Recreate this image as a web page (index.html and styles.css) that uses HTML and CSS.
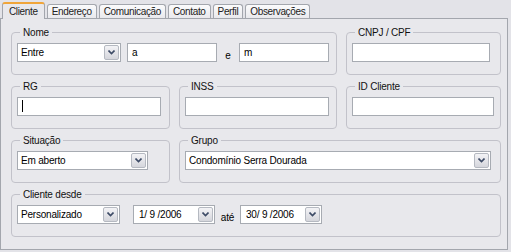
FILE: index.html
```html
<!DOCTYPE html>
<html>
  <head>
    <title>Cadastro de Cliente</title>
    <meta name="viewport" content="width=device-width, initial-scale=1.0" />
    <link rel="stylesheet" href="styles.css">
  </head>
  <body>
    <div class="window">
      <div class="tabs">
        <span class="tab active">Cliente</span>
        <span class="tab">Endereço</span>
        <span class="tab">Comunicação</span>
        <span class="tab">Contato</span>
        <span class="tab">Perfil</span>
        <span class="tab">Observações</span>
      </div>
      <div class="panel">
        <fieldset class="group span-2">
          <legend>Nome</legend>
          <div class="row">
            <div class="combo w-nome">
              <span class="value">Entre</span>
              <span class="drop"><svg width="7" height="5" viewBox="0 0 7 5"><path d="M0.5 0.5 L3.5 3.5 L6.5 0.5" fill="none" stroke="#3d4b66" stroke-width="1.6"/></svg></span>
            </div>
            <div class="field w-a">a</div>
            <span class="label-e">e</span>
            <div class="field w-m">m</div>
          </div>
        </fieldset>
        <fieldset class="group">
          <legend>CNPJ / CPF</legend>
          <div class="row">
            <div class="field w-cnpj"></div>
          </div>
        </fieldset>

        <fieldset class="group">
          <legend>RG</legend>
          <div class="row">
            <div class="field w-rg"><span class="caret"></span></div>
          </div>
        </fieldset>
        <fieldset class="group">
          <legend>INSS</legend>
          <div class="row">
            <div class="field w-inss"></div>
          </div>
        </fieldset>
        <fieldset class="group">
          <legend>ID Cliente</legend>
          <div class="row">
            <div class="field w-id"></div>
          </div>
        </fieldset>

        <fieldset class="group">
          <legend>Situação</legend>
          <div class="row">
            <div class="combo w-sit">
              <span class="value">Em aberto</span>
              <span class="drop"><svg width="7" height="5" viewBox="0 0 7 5"><path d="M0.5 0.5 L3.5 3.5 L6.5 0.5" fill="none" stroke="#3d4b66" stroke-width="1.6"/></svg></span>
            </div>
          </div>
        </fieldset>
        <fieldset class="group span-2">
          <legend>Grupo</legend>
          <div class="row">
            <div class="combo w-grupo">
              <span class="value">Condomínio Serra Dourada</span>
              <span class="drop"><svg width="7" height="5" viewBox="0 0 7 5"><path d="M0.5 0.5 L3.5 3.5 L6.5 0.5" fill="none" stroke="#3d4b66" stroke-width="1.6"/></svg></span>
            </div>
          </div>
        </fieldset>

        <fieldset class="group span-3">
          <legend>Cliente desde</legend>
          <div class="row">
            <div class="combo w-pers">
              <span class="value">Personalizado</span>
              <span class="drop"><svg width="7" height="5" viewBox="0 0 7 5"><path d="M0.5 0.5 L3.5 3.5 L6.5 0.5" fill="none" stroke="#3d4b66" stroke-width="1.6"/></svg></span>
            </div>
            <div class="combo date w-date1">
              <span class="value">1/ 9 /2006</span>
              <span class="drop"><svg width="7" height="5" viewBox="0 0 7 5"><path d="M0.5 0.5 L3.5 3.5 L6.5 0.5" fill="none" stroke="#3d4b66" stroke-width="1.6"/></svg></span>
            </div>
            <span class="label-ate">até</span>
            <div class="combo date w-date2">
              <span class="value">30/ 9 /2006</span>
              <span class="drop"><svg width="7" height="5" viewBox="0 0 7 5"><path d="M0.5 0.5 L3.5 3.5 L6.5 0.5" fill="none" stroke="#3d4b66" stroke-width="1.6"/></svg></span>
            </div>
          </div>
        </fieldset>
      </div>
    </div>
  </body>
</html>
```

FILE: styles.css
```css
body {
  margin: 0;
  background: #e3e3e8;
  font-family: "Liberation Sans", Arial, sans-serif;
  font-size: 10px;
  letter-spacing: -0.2px;
  color: #000;
}
.window {
  width: 508px;
}
.tabs {
  display: flex;
  align-items: flex-end;
  gap: 2px;
  height: 18px;
  padding-left: 2px;
}
.tab {
  height: 14px;
  line-height: 13px;
  box-sizing: border-box;
  padding: 0 4px;
  border: 1px solid #a3a6ad;
  border-bottom: none;
  border-radius: 3px 3px 0 0;
  background: linear-gradient(#fbfbfc, #e9e9ed);
  color: #222;
  letter-spacing: -0.35px;
}
.tab.active {
  height: 17px;
  line-height: 15px;
  padding: 0 6px;
  margin-bottom: -1px;
  border-top: 2px solid #f0a53a;
  background: #e8e8ec;
  position: relative;
  z-index: 1;
}
.panel {
  height: 232px;
  box-sizing: border-box;
  border: 1px solid #a3a6ad;
  background: #e8e8ec;
  padding: 7px 0 0 10px;
  display: grid;
  grid-template-columns: 159px 158px 155px;
  grid-auto-rows: 49px;
  column-gap: 9px;
  row-gap: 5px;
}
.span-2 {
  grid-column: span 2;
}
.span-3 {
  grid-column: span 3;
}
.group {
  margin: 0;
  min-width: 0;
  padding: 4px 6px 0 5px;
  border: 1px solid #c2c2ca;
  border-radius: 4px;
}
.group legend {
  padding: 0 3px;
  margin-left: 3px;
  line-height: 13px;
  color: #111;
}
.row {
  display: flex;
  align-items: center;
}
.field {
  height: 19px;
  box-sizing: border-box;
  border: 1px solid #a7abb2;
  background: #fff;
  padding-left: 4px;
  line-height: 17px;
}
.caret {
  display: inline-block;
  width: 1px;
  height: 12px;
  margin-top: 2px;
  background: #000;
  vertical-align: top;
}
.combo {
  display: flex;
  align-items: center;
  height: 19px;
  box-sizing: border-box;
  border: 1px solid #a7abb2;
  background: #fff;
}
.combo .value {
  flex: 1;
  padding-left: 3px;
  white-space: nowrap;
  overflow: hidden;
}
.combo.date .value {
  padding-left: 5px;
}
.drop {
  width: 15px;
  height: 15px;
  margin-right: 1px;
  box-sizing: border-box;
  border: 1px solid #b5b9c1;
  border-radius: 2px;
  background: linear-gradient(#f3f3f6, #d5d6dc);
  display: flex;
  align-items: center;
  justify-content: center;
}
.w-nome { width: 104px; }
.w-a { width: 90px; margin-left: 6px; }
.label-e { width: 22px; text-align: center; padding-top: 5px; }
.w-m { width: 90px; }
.w-cnpj { width: 138px; }
.w-rg { width: 144px; }
.w-inss { width: 144px; }
.w-id { width: 143px; }
.w-sit { width: 131px; }
.w-grupo { width: 306px; }
.w-pers { width: 103px; }
.w-date1 { width: 82px; margin-left: 13px; }
.label-ate { width: 25px; text-align: center; padding-top: 5px; }
.w-date2 { width: 82px; }
```
